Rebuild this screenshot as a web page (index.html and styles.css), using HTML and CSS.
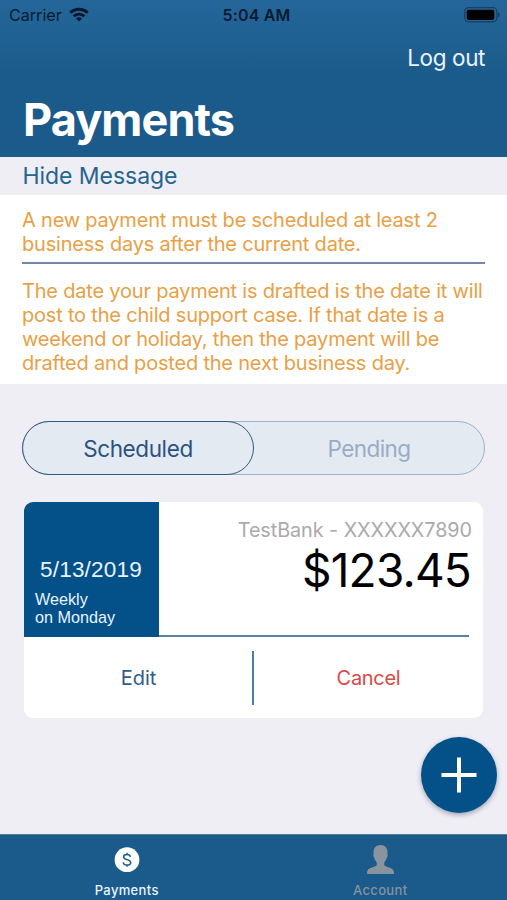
FILE: index.html
```html
<!DOCTYPE html>
<html lang="en">
<head>
<meta charset="utf-8">
<title>Payments</title>
<link rel="stylesheet" href="styles.css">
</head>
<body>
<div class="app">
  <header class="header">
    <div class="status">
      <div class="carrier">
        <span class="carrier-name">Carrier</span>
        <svg class="wifi" viewBox="0 0 20 15" width="20" height="15" fill="none" stroke="#06162b" stroke-width="2.9">
          <path d="M1.3 5.800a12.300 12.300 0 0 1 17.400 0"/>
          <path d="M4.600 9.300a7.700 7.700 0 0 1 10.800 0"/>
          <path d="M10 14.600l-3.100-3.100a4.400 4.400 0 0 1 6.200 0z" fill="#06162b" stroke="none"/>
        </svg>
      </div>
      <span class="time">5:04 AM</span>
      <svg class="battery" viewBox="0 0 36 16" width="36" height="16">
        <rect x=".7" y=".7" width="32.2" height="14.2" rx="4.2" fill="none" stroke="#173f63" stroke-width="1.3"/>
        <rect x="2.7" y="2.7" width="27.6" height="10.2" rx="2" fill="#000"/>
        <path d="M34 5.200c2.300.8 2.300 4.400 0 5.200z" fill="#173f63"/>
      </svg>
    </div>
    <a class="logout">Log out</a>
    <h1 class="title">Payments</h1>
  </header>

  <div class="toggle"><span class="toggle-label">Hide Message</span></div>

  <section class="message">
    <p class="note note-first">A new payment must be scheduled at least 2<br>business days after the current date.</p>
    <p class="note note-second">The date your payment is drafted is the date it will<br>post to the child support case. If that date is a<br>weekend or holiday, then the payment will be<br>drafted and posted the next business day.</p>
  </section>

  <main class="content">
    <div class="segments">
      <div class="segment active"><span>Scheduled</span></div>
      <div class="segment pending"><span>Pending</span></div>
    </div>

    <article class="card">
      <div class="card-top">
        <div class="when">
          <div class="date">5/13/2019</div>
          <div class="repeat">Weekly<br>on Monday</div>
        </div>
        <div class="details">
          <div class="bank">TestBank - XXXXXX7890</div>
          <div class="amount">$123.45</div>
        </div>
      </div>
      <div class="actions">
        <div class="action edit"><span>Edit</span></div>
        <div class="divider"></div>
        <div class="action cancel"><span>Cancel</span></div>
      </div>
    </article>

    <div class="fab">
      <svg viewBox="0 0 36 36" width="36" height="36" stroke="#fff" stroke-width="4"><path d="M18 .5v35M.5 18h35"/></svg>
    </div>
  </main>

  <nav class="tabs">
    <div class="tab selected">
      <svg class="tab-icon" viewBox="0 0 30 32" width="30" height="32">
        <circle cx="15" cy="15.700" r="12.400" fill="#fff"/>
        <path d="M18.500 12.900c-.3-1.500-1.600-2.400-3.500-2.400s-3.400 1-3.400 2.500c0 3.500 7.100 1.700 7.100 5.400 0 1.600-1.500 2.600-3.600 2.600-2.200 0-3.700-1-3.800-2.800M15 8.700v2M15 20.800v2" fill="none" stroke="#1c5b8b" stroke-width="1.500"/>
      </svg>
      <span class="tab-label">Payments</span>
    </div>
    <div class="tab">
      <svg class="tab-icon" viewBox="0 0 30 32" width="30" height="32">
        <path d="M15.500 1c4.500 0 7 2.900 7 7.200 0 .6-.1 1.200-.1 1.700.6.500.3 2.700-.5 3.300-.4 2.100-1.500 3.800-2.600 5v2.200c0 1 .6 1.500 1.500 1.900l5.100 2c2.200.9 3.100 2.400 3.100 5.700H2c0-3.300.9-4.800 3.100-5.700l5.100-2c.9-.4 1.500-.9 1.500-1.900v-2.200c-1.100-1.200-2.200-2.900-2.600-5-.8-.6-1.100-2.800-.5-3.300 0-.5-.1-1.100-.1-1.700C8.500 3.900 11 1 15.500 1z" fill="#89949f"/>
      </svg>
      <span class="tab-label">Account</span>
    </div>
  </nav>
</div>
</body>
</html>
```
FILE: styles.css
```css
* { box-sizing: border-box; }
body { margin: 0; font-family: Inter, "Liberation Sans", sans-serif; }
h1, p { margin: 0; }
svg { display: block; }
.app { width: 507px; height: 900px; display: flex; flex-direction: column; background: #efeef4; overflow: hidden; }

.header { height: 157px; background: linear-gradient(#25669a 0, #1b5b8b 75px, #1b5a8a 100%); color: #fff; }
.status { height: 30px; padding: 0 7px 0 9px; display: grid; grid-template-columns: 1fr auto 1fr; align-items: center; color: #081b33; }
.carrier { display: flex; align-items: center; gap: 7px; }
.carrier-name { font-size: 16.200px; letter-spacing: -.05px; }
.wifi { margin-top: -2px; }
.time { padding-left: 3px; margin-right: -1px; font-size: 16px; font-weight: 600; letter-spacing: .15px; }
.battery { justify-self: end; margin-top: -1px; }
.logout { display: block; margin-top: 13px; padding-right: 22px; text-align: right; font-size: 22.500px; line-height: 30px; letter-spacing: -.4px; color: #e9f4fc; }
.title { margin-top: 19px; padding-left: 23px; font-size: 45px; line-height: 56px; font-weight: 700; letter-spacing: -.9px; }

.toggle { height: 38px; padding-left: 22.500px; font-size: 23px; line-height: 38px; letter-spacing: -.05px; color: #25658f; }

.message { height: 189px; padding: 13px 22px 0; background: #fff; color: #e9a045; }
.note { font-size: 20px; line-height: 24.100px; letter-spacing: -.2px; white-space: nowrap; }
.note-first { height: 56px; border-bottom: 2px solid #7188a8; }
.note-second { padding-top: 15px; }

.content { flex: 1; padding: 37px 22px 0; position: relative; }
.segments { height: 54px; display: flex; border: 1.500px solid #9bb2ca; border-radius: 27px; background: #e4eaf2; }
.segment { flex: 1; display: flex; align-items: center; justify-content: center; font-size: 22.500px; letter-spacing: -.4px; color: #98acc4; }
.segment.pending { letter-spacing: -.6px; }
.segment.active { margin: -1px 0 -1px -1px; border: 1.500px solid #315985; border-radius: 27px; color: #2a5280; }

.card { margin: 27px 2px 0 2px; height: 216px; border-radius: 9px; background: #fff; overflow: hidden; }
.card-top { height: 135px; display: flex; }
.when { width: 135px; padding: 55px 0 0 11px; background: #045088; color: #e8f4ff; font-family: "Liberation Sans", sans-serif; }
.date { padding-left: 5px; font-size: 22.500px; line-height: 26px; letter-spacing: .2px; }
.repeat { margin-top: 7px; font-size: 16.200px; line-height: 18.300px; }
.details { flex: 1; margin-right: 14px; padding-top: 16px; border-bottom: 2px solid #5b82a4; text-align: right; }
.bank { margin-right: -3px; font-size: 19.800px; line-height: 25px; letter-spacing: -.05px; color: #aaa; }
.amount { margin-right: -2px; font-size: 46px; line-height: 54px; letter-spacing: -.8px; color: #000; }
.actions { height: 81px; display: flex; align-items: center; font-size: 20px; color: #315b8c; }
.action { flex: 1; text-align: center; }
.edit { margin-right: -1px; }
.divider { width: 2px; height: 54px; background: #4f7ca1; }
.cancel { letter-spacing: -.3px; color: #d94a45; }

.fab { position: absolute; left: 420.500px; top: 353px; width: 76px; height: 76px; border-radius: 50%; background: #045088; display: grid; place-items: center; box-shadow: 0 2px 5px rgba(0, 30, 60, .35); }

.tabs { height: 66px; display: flex; background: #1b5b8b; border-top: 1px solid #527ba0; }
.tab { flex: 1; display: flex; flex-direction: column; align-items: center; padding-top: 9px; color: #84929f; }
.tab.selected { color: #e9f5fd; }
.tab-label { margin-top: 6px; font-size: 13px; line-height: 16px; font-weight: 500; letter-spacing: .35px; }
```
